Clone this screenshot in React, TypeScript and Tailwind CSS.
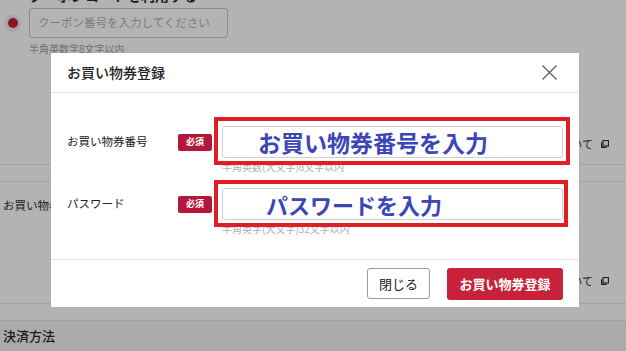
import React from 'react';

const jp = { fontFamily: '"Noto Sans CJK JP", "Noto Sans", sans-serif' };

const Required = () => (
  <span className="flex h-[17px] w-[34px] items-center justify-center rounded-[2px] bg-[#b3173a] text-[9px] font-bold text-white">
    必須
  </span>
);

interface FieldRowProps {
  label: string;
  text: string;
  hint: string;
  textClass: string;
  boxClass: string;
  className?: string;
}

const FieldRow: React.FC<FieldRowProps> = ({ label, text, hint, textClass, boxClass, className }) => (
  <div className={`flex items-start ${className ?? ''}`}>
    <div className="flex h-[32px] w-[111px] items-center text-[11.5px] text-[#222]">{label}</div>
    <div className="flex h-[32px] w-[44px] items-center">
      <Required />
    </div>
    <div className="relative w-[341px]">
      <div
        className={`flex h-[32px] items-center whitespace-nowrap rounded-[3px] border border-[#cfcfcf] bg-white font-bold text-[#3b46b8] ${textClass}`}
      >
        {text}
      </div>
      <div className="mt-[3px] text-[10px] leading-[12px] text-[#b0b0b0]">{hint}</div>
      <div className={`pointer-events-none absolute border-[4px] border-[#e31d27] ${boxClass}`} />
    </div>
  </div>
);

const CopyIcon = () => (
  <svg width="8" height="8" viewBox="0 0 8 8" className="ml-[8px]">
    <rect x="2" y="0.5" width="5.5" height="5.5" fill="none" stroke="#222" strokeWidth="1.2" />
    <path d="M0.6 2.2 V7.4 H5.8" fill="none" stroke="#222" strokeWidth="1.2" />
  </svg>
);

export default function App() {
  return (
    <div className="relative h-[351px] w-[626px] overflow-hidden bg-[#b3b3b3]" style={jp}>
      {/* page behind the dialog */}
      <div className="flex h-[165px] flex-col border-b border-[#a2a2a2]">
        <div className="-mt-[14px] h-[22px] pl-[29px] text-[14px] font-bold leading-[18px] text-[#1c1c1c]">
          クーポンコードを利用する
        </div>
        <div className="flex h-[30px] items-center">
          <div className="ml-[4px] flex h-[17px] w-[17px] items-center justify-center rounded-full bg-[#a6a6a6]">
            <div className="h-[10px] w-[10px] rounded-full bg-[#8f1320]" />
          </div>
          <div className="ml-[8px] flex h-[30px] w-[199px] items-center whitespace-nowrap rounded-[3px] border border-[#8c8c8c] pl-[8px] text-[11.5px] text-[#7d7d7d]">
            クーポン番号を入力してください
          </div>
        </div>
        <div className="mt-[4px] pl-[29px] text-[10px] leading-[14px] text-[#6f6f6f]">半角英数字8文字以内</div>
        <div className="mt-[80px] flex items-center justify-end pr-[17px] text-[11px] text-[#222]">
          ついて
          <CopyIcon />
        </div>
      </div>
      <div className="h-[17px] border-b border-[#a2a2a2]" />
      <div className="flex h-[122px] flex-col border-b border-[#a2a2a2]">
        <div className="mt-[14px] pl-[3px] text-[11.5px] leading-[18px] text-[#1c1c1c]">お買い物券</div>
        <div className="mt-[59px] flex items-center justify-end pr-[17px] text-[11px] text-[#222]">
          ついて
          <CopyIcon />
        </div>
      </div>
      <div className="h-[17px] border-b border-[#a2a2a2]" />
      <div className="flex h-[30px] items-center bg-[#ababab] pl-[3px] text-[13px] font-medium text-[#1c1c1c]">
        決済方法
      </div>

      {/* dialog */}
      <div className="absolute left-[51px] top-[53px] flex h-[254px] w-[528px] flex-col bg-white">
        <div className="flex h-[40px] items-center justify-between border-b border-[#e6e6e6] pl-[16px] pr-[22px]">
          <span className="text-[14px] font-medium text-[#222]">お買い物券登録</span>
          <svg width="15" height="15" viewBox="0 0 15 15">
            <path d="M0.5 0.5 L14.5 14.5 M14.5 0.5 L0.5 14.5" stroke="#555" strokeWidth="1.1" fill="none" />
          </svg>
        </div>
        <div className="flex-1 border-b border-[#e6e6e6] pl-[16px] pt-[33px]">
          <FieldRow
            label="お買い物券番号"
            text="お買い物券番号を入力"
            hint="半角英数(大文字)8文字以内"
            textClass="pl-[35px] text-[23px]"
            boxClass="-left-[8px] -top-[9px] -right-[7px] h-[48px]"
          />
          <FieldRow
            className="mt-[15px]"
            label="パスワード"
            text="パスワードを入力"
            hint="半角英字(大文字)32文字以内"
            textClass="pl-[43px] text-[22px]"
            boxClass="-left-[8px] -top-[8px] -right-[5px] h-[47px]"
          />
        </div>
        <div className="flex h-[47px] items-center justify-end gap-[17px] pr-[16px]">
          <button className="h-[31px] w-[63px] rounded-[3px] border border-[#9a9a9a] bg-white text-[13px] text-[#222]">
            閉じる
          </button>
          <button className="h-[32px] w-[116px] rounded-[3px] bg-[#c8223a] text-[13px] font-bold text-white">
            お買い物券登録
          </button>
        </div>
      </div>
    </div>
  );
}
